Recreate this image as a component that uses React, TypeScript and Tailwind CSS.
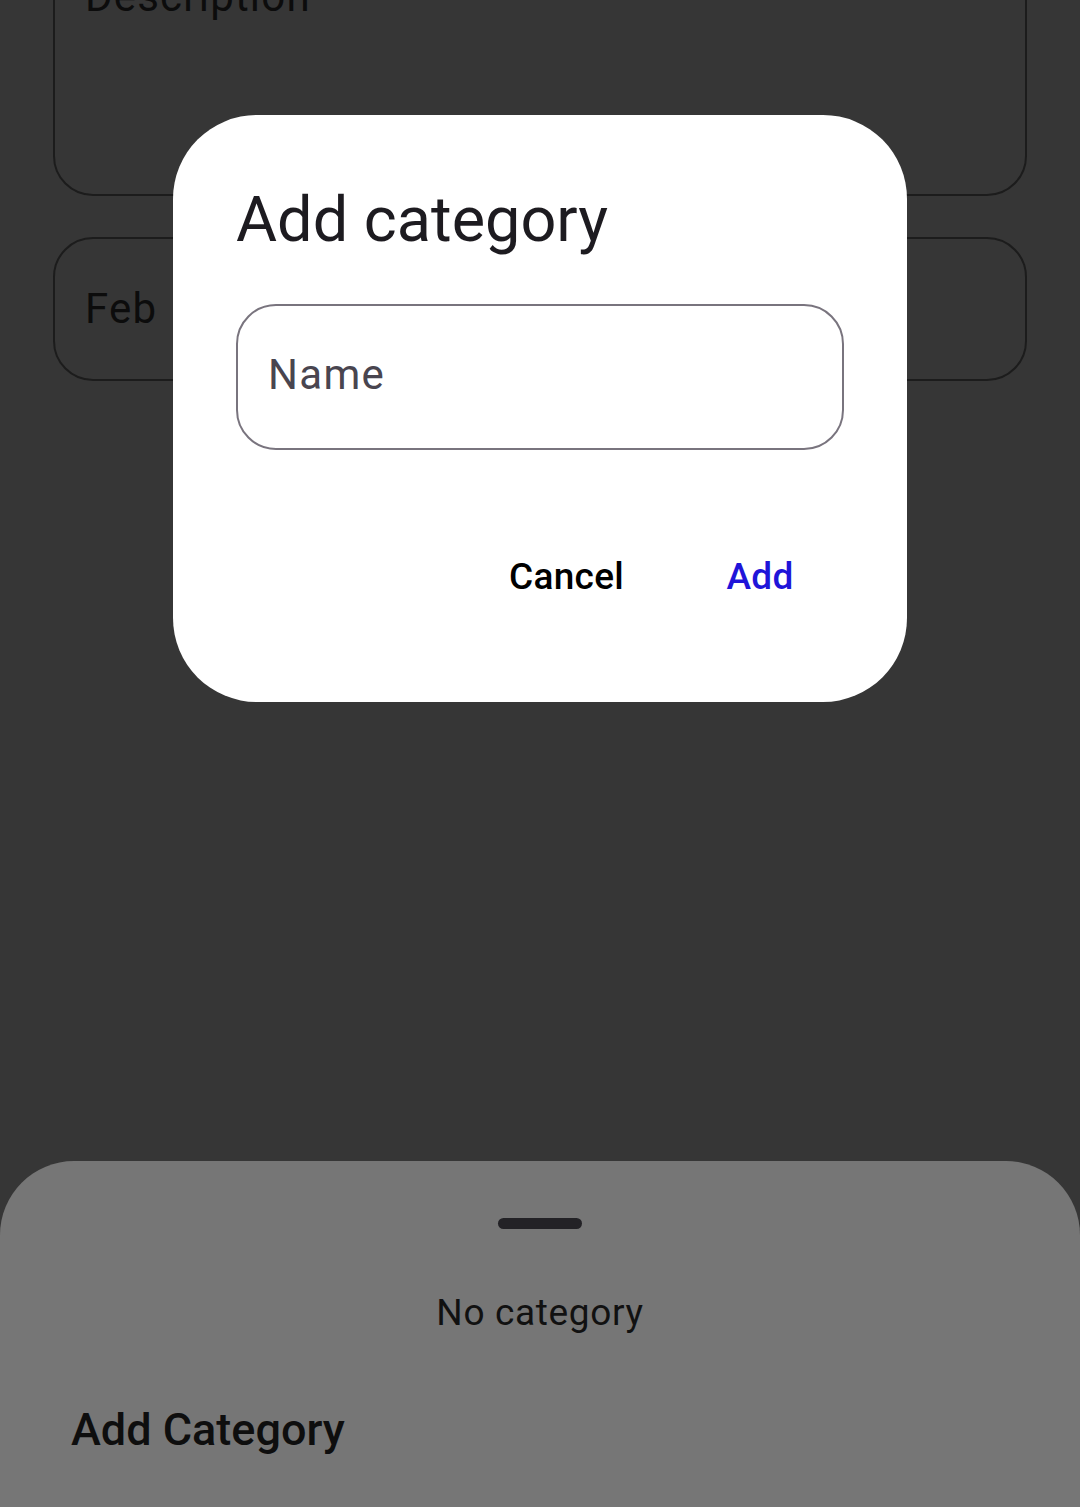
const Field = ({ label, className }: { label: string; className: string }) => (
  <div className={`rounded-[40px] border-[2.5px] border-[#1c1c1c] px-[30px] ${className}`}>
    <span className="text-[42px] leading-[50px] tracking-[1.2px] text-[#0c0c0c]">{label}</span>
  </div>
);

const App = () => {
  return (
    <div className="relative h-[1507px] w-[1080px] overflow-hidden bg-[#363636] font-['Roboto',sans-serif]">
      {/* background form, dimmed by scrim */}
      <div className="flex flex-col gap-[41px] px-[53px]">
        <Field label="Description" className="mt-[-54px] h-[250px] pt-[24px]" />
        <Field label="Feb" className="flex h-[144px] items-center" />
      </div>

      {/* dialog */}
      <div className="absolute left-[173px] top-[115px] flex h-[587px] w-[734px] flex-col rounded-[84px] bg-white px-[63px] pt-[67px]">
        <h2 className="text-[63px] font-normal leading-[76px] text-[#1d1b20]">Add category</h2>
        <div className="mt-[46px] flex h-[146px] items-center rounded-[40px] border-[2.5px] border-[#79747e] pb-[4px] pl-[30px]">
          <span className="text-[42px] leading-[50px] tracking-[1.3px] text-[#49454f]">Name</span>
        </div>
        <div className="mt-[74px] flex h-[105px] justify-end gap-[21px]">
          <button className="flex h-full min-w-[168px] items-center justify-center px-[31px] text-[37px] font-medium tracking-[0.3px] text-black">
            Cancel
          </button>
          <button className="flex h-full min-w-[168px] items-center justify-center px-[31px] text-[37px] font-medium tracking-[0.3px] text-[#1f14d9]">
            Add
          </button>
        </div>
      </div>

      {/* bottom sheet */}
      <div className="absolute inset-x-0 bottom-0 top-[1161px] rounded-t-[74px] bg-[#767676]">
        <div className="mx-auto mt-[57px] h-[11px] w-[84px] rounded-full bg-[#232226]" />
        <p className="mt-[62px] text-center text-[37px] leading-[44px] tracking-[0.65px] text-[#111]">No category</p>
        <p className="mt-[68px] pl-[71px] text-[45px] font-medium leading-[54px] text-[#0e0e0e]">Add Category</p>
      </div>
    </div>
  );
};

export default App;
